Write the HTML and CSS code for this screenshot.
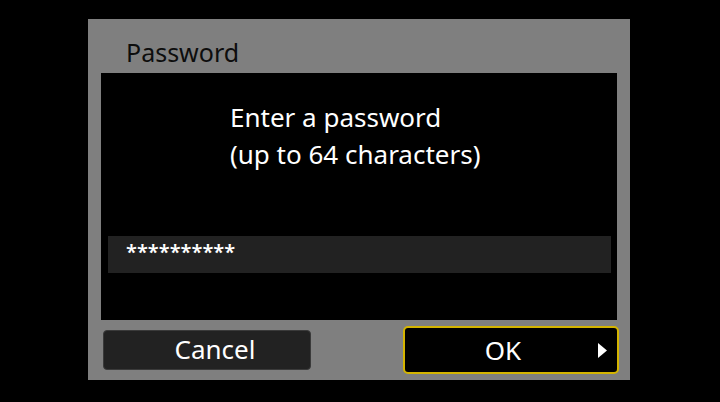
FILE: index.html
```html
<!DOCTYPE html>
<html lang="en">
<head>
<meta charset="utf-8">
<title>Password</title>
<link rel="stylesheet" href="styles.css">
</head>
<body>

<div class="panel">
    <h3 class="panel_title">Password</h3>

    <div class="screen">
        <p class="prompt">Enter a password<br>(up to 64 characters)</p>
        <div class="field">**********</div>
    </div>

    <div class="buttons">
        <div class="btn btn_cancel">Cancel</div>
        <div class="btn btn_ok">
            <span></span>
            <span class="ok_label">OK</span>
            <svg class="arrow" width="9" height="15" viewBox="0 0 9 15"><polygon points="0,0 9,7.5 0,15" fill="#fff"/></svg>
        </div>
    </div>
</div>

</body>
</html>
```

FILE: styles.css
```css
html, body
{
margin: 0;
padding: 0;
background: #000;
font-family: "Noto Sans", "Open Sans", sans-serif;
}

.panel
{
width: 542px;
height: 361px;
margin-top: 19px;
margin-left: 88px;
background: #7f7f7f;
box-sizing: border-box;
display: flex;
flex-direction: column;
}

.panel_title
{
height: 54px;
margin: 0;
padding-left: 38px;
box-sizing: border-box;
font-size: 25px;
font-weight: normal;
line-height: 66px;
color: #0d0d0d;
}

.screen
{
height: 247px;
margin: 0 13px;
background: #000;
display: flex;
flex-direction: column;
}

.prompt
{
margin: 0;
padding-top: 26px;
padding-left: 129px;
font-size: 26px;
line-height: 37px;
color: #fff;
}

.field
{
height: 37px;
margin-top: 63px;
margin-left: 7px;
margin-right: 6px;
padding-left: 18px;
background: #222;
color: #fff;
font-size: 20px;
font-weight: 600;
line-height: 32px;
letter-spacing: 0;
}

.buttons
{
flex: 1;
display: flex;
align-items: center;
justify-content: space-between;
padding-left: 15px;
padding-right: 11px;
}

.btn
{
box-sizing: border-box;
color: #fff;
font-size: 26px;
text-align: center;
}

.btn_cancel
{
width: 208px;
height: 40px;
padding-left: 16px;
line-height: 37px;
background: #222;
border: 1px solid #3a3a3a;
border-radius: 4px;
}

.btn_ok
{
width: 216px;
height: 48px;
line-height: 44px;
background: #000;
border: 2px solid #d4b400;
border-radius: 5px;
display: grid;
grid-template-columns: 1fr auto 1fr;
align-items: center;
}

.ok_label
{
margin-right: 16px;
}

.arrow
{
justify-self: end;
margin-right: 10px;
margin-top: 1px;
}
```
